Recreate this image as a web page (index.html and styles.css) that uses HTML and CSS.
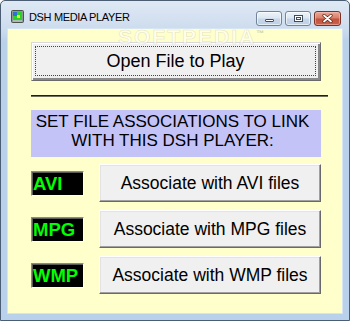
FILE: index.html
```html
<!DOCTYPE html>
<html>
<head>
<meta charset="utf-8">
<link rel="stylesheet" href="styles.css">
</head>
<body>
<div class="window">
  <div class="titlebar">
    <svg class="app-icon" width="13" height="13" viewBox="0 0 13 13">
      <rect x="0.5" y="0.5" width="12" height="12" rx="1" fill="#8c9a90" stroke="#4a524c"/>
      <rect x="2" y="2" width="9" height="8" fill="#27d42a"/>
      <rect x="2" y="2" width="4" height="4" fill="#2f6fd8"/>
      <rect x="6" y="5" width="3" height="3" fill="#e8e830"/>
      <rect x="2" y="10.5" width="9" height="1" fill="#d0d8d2"/>
    </svg>
    <span class="title">DSH MEDIA PLAYER</span>
    <div class="caption-buttons">
      <div class="cap-btn cap-min"><span class="min-glyph"></span></div>
      <div class="cap-btn cap-max"><span class="max-glyph"></span></div>
      <div class="cap-btn cap-close">
        <svg width="11" height="9" viewBox="0 0 11 9">
          <path d="M2 1.5 L9 7.5 M9 1.5 L2 7.5" stroke="#5a2318" stroke-width="3.2" stroke-linecap="round"/>
          <path d="M2 1.5 L9 7.5 M9 1.5 L2 7.5" stroke="#ffffff" stroke-width="1.8" stroke-linecap="round"/>
        </svg>
      </div>
    </div>
  </div>
  <div class="client">
    <button class="open-btn"><span class="focus-rect">Open File to Play</span></button>
    <div class="rule"></div>
    <div class="assoc-box">SET FILE ASSOCIATIONS TO LINK<br>WITH THIS DSH PLAYER:</div>
    <div class="rows">
      <div class="row"><div class="tag">AVI</div><button class="assoc-btn">Associate with AVI files</button></div>
      <div class="row"><div class="tag">MPG</div><button class="assoc-btn">Associate with MPG files</button></div>
      <div class="row"><div class="tag">WMP</div><button class="assoc-btn">Associate with WMP files</button></div>
    </div>
  </div>
  <span class="watermark">SOFTPEDIA<sup>™</sup></span>
</div>
</body>
</html>
```

FILE: styles.css
```css
html, body {
  margin: 0;
  padding: 0;
}
body {
  width: 350px;
  height: 321px;
  overflow: hidden;
  font-family: "Liberation Sans", Arial, sans-serif;
}
.window {
  position: relative;
  box-sizing: border-box;
  width: 350px;
  height: 321px;
  border: 1px solid #4b5d72;
  border-radius: 5px 5px 0 0;
  background: linear-gradient(180deg, #dfe9f5 0px, #cddcee 28px, #bad1ea 40px, #b9d1ea 100%);
  display: flex;
  flex-direction: column;
  padding: 0 7px 7px 7px;
}
.titlebar {
  height: 28px;
  display: flex;
  align-items: flex-start;
  margin: 0 -7px;
  padding: 0 8px 0 10px;
}
.app-icon {
  margin-top: 9px;
  flex: none;
}
.title {
  margin-left: 5px;
  margin-top: 10px;
  font-size: 11px;
  letter-spacing: -0.35px;
  color: #000;
  line-height: 13px;
}
.caption-buttons {
  margin-left: auto;
  margin-top: 10px;
  display: flex;
  gap: 3px;
}
.cap-btn {
  box-sizing: border-box;
  height: 15px;
  border-radius: 3px;
  display: flex;
  align-items: center;
  justify-content: center;
}
.cap-min, .cap-max {
  width: 26px;
  border: 1px solid #71849b;
  background: linear-gradient(180deg, #eef3f9 0%, #dde7f2 45%, #c6d6e9 55%, #bfd1e6 100%);
  box-shadow: inset 0 0 0 1px rgba(255,255,255,0.6);
}
.cap-close {
  width: 27px;
  border: 1px solid #7a3226;
  background: linear-gradient(180deg, #e9a898 0%, #d9806b 45%, #c3523c 55%, #c9644c 100%);
  box-shadow: inset 0 0 0 1px rgba(255,200,190,0.5);
}
.min-glyph {
  width: 9px;
  height: 3px;
  margin-top: 4px;
  box-sizing: border-box;
  background: #fff;
  border: 1px solid #3d4b5c;
  border-radius: 1px;
}
.max-glyph {
  width: 9px;
  height: 7px;
  box-sizing: border-box;
  border: 1px solid #3d4b5c;
  background: #fff;
  box-shadow: inset 0 0 0 1px #fff, inset 0 0 0 2px #3d4b5c;
}
.client {
  flex: 1;
  background: #ffffcc;
  box-shadow: 0 0 0 1px #d7e4f2;
  padding: 13px 0 0 23px;
  display: flex;
  flex-direction: column;
  align-items: flex-start;
}
button {
  font-family: "Liberation Sans", Arial, sans-serif;
  color: #000;
  padding: 0;
  margin: 0;
  cursor: default;
}
.open-btn {
  box-sizing: border-box;
  width: 290px;
  height: 39px;
  background: #f0f0f0;
  border: 1px solid;
  border-color: #d8d8d8 #6a6a6a #6a6a6a #d8d8d8;
  box-shadow: inset 1px 1px 0 #ffffff, inset -2px -2px 0 #8a8a8a;
  display: flex;
  font-size: 18px;
}
.focus-rect {
  flex: 1;
  margin: 3px 4px 4px 3px;
  border: 1px dotted #444;
  display: flex;
  align-items: center;
  justify-content: center;
}
.rule {
  width: 297px;
  height: 0;
  margin-top: 14px;
  border-top: 1px solid #1e1e1e;
  border-bottom: 1px solid #6e6e5a;
}
.assoc-box {
  box-sizing: border-box;
  width: 290px;
  height: 47px;
  margin-top: 13px;
  padding: 2px 7px 0 0;
  background: #c3c3f8;
  font-size: 17px;
  line-height: 19px;
  text-align: center;
  color: #000;
}
.rows {
  margin-top: 7px;
  display: flex;
  flex-direction: column;
  gap: 8px;
}
.row {
  display: flex;
  align-items: center;
  gap: 15px;
}
.tag {
  box-sizing: border-box;
  width: 53px;
  height: 25px;
  margin-top: 1px;
  background: #000;
  border: 1px solid;
  border-color: #8a8a8a #ffffff #ffffff #8a8a8a;
  box-shadow: inset 1px 1px 0 #5a5a5a;
  color: #00ff00;
  font-weight: bold;
  font-size: 18.5px;
  line-height: 23px;
  padding-left: 1px;
}
.assoc-btn {
  box-sizing: border-box;
  width: 222px;
  height: 38px;
  background: #f0f0f0;
  border: 1px solid;
  border-color: #ffffff #696969 #696969 #ffffff;
  box-shadow: inset -1px -1px 0 #a0a0a0, inset 1px 1px 0 #e3e3e3;
  font-size: 17.5px;
  text-align: center;
}
.watermark {
  position: absolute;
  top: 24px;
  left: 117px;
  font-size: 21px;
  font-weight: bold;
  letter-spacing: 2px;
  color: rgba(255, 255, 255, 0.55);
  -webkit-text-stroke: 0.6px rgba(170, 170, 150, 0.35);
  pointer-events: none;
}
.watermark sup {
  font-size: 8px;
  -webkit-text-stroke: 0;
  color: rgba(150,150,150,0.5);
}
```
